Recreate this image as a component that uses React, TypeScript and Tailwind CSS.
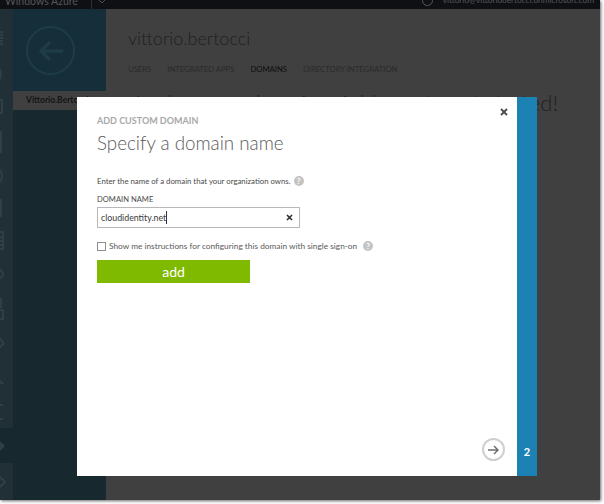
import React from "react";

function Help() {
  return (
    <span className="w-[10px] h-[10px] rounded-full bg-[#c4c4c4] text-white text-[8px] leading-[10px] text-center font-bold inline-block shrink-0">?</span>
  );
}

function RailIcon({ h, mt, d }: { h: number; mt: number; d: string }) {
  return (
    <svg width="13" height={h} viewBox={`0 0 13 ${h}`} className="block shrink-0" style={{ marginTop: mt }} fill="none" stroke="#303f46" strokeWidth="2">
      <path d={d} />
    </svg>
  );
}

export default function App() {
  return (
    <div className="w-[604px] h-[504px] bg-white overflow-hidden relative font-['Lato','Open_Sans',sans-serif]">
      <div className="w-[600px] h-[500px] bg-[#404040] flex flex-col shadow-[1px_1px_3px_#666]">
        <div className="h-[9px] shrink-0 bg-[#0e1014] flex justify-between overflow-hidden">
          <div className="flex h-[9px] items-start">
            <span className="text-[10.5px] leading-[12px] text-[#55575b] pl-[5px] -mt-[5px] whitespace-nowrap">Windows Azure</span>
            <span className="w-px h-[9px] bg-[#2c2e32] ml-[13px]" />
            <svg width="8" height="6" viewBox="0 0 8 6" className="ml-[6px]" fill="none" stroke="#4c4e52" strokeWidth="1"><path d="M1 0l3 3 3-3" /></svg>
          </div>
          <div className="flex h-[9px] items-start pr-[6px]">
            <span className="w-[11px] h-[11px] rounded-full border border-[#55575b] -mt-[5px] mr-[10px]" />
            <span className="text-[8.25px] leading-[12px] text-[#55575b] -mt-[6px] whitespace-nowrap">vittorio@vittoriobertocci.onmicrosoft.com</span>
          </div>
        </div>
        <div className="flex-1 flex min-h-0">
          <div className="w-[13px] shrink-0 bg-[#17282f] flex flex-col overflow-hidden">
            <div className="h-[419px] shrink-0 bg-[#212f36] flex flex-col overflow-hidden">
              <div className="flex flex-col -ml-[9px]">
                <RailIcon h={16} mt={22} d="M1 1h11M1 4h11M1 7h11M1 10h11M1 13h11" />
                <RailIcon h={18} mt={18} d="M10 9a5.5 7.5 0 1 1-11 0a5.5 7.5 0 1 1 11 0" />
                <RailIcon h={15} mt={16} d="M1 1h10v13H1z" />
                <RailIcon h={22} mt={17} d="M10 0v22" />
                <RailIcon h={14} mt={16} d="M1 7a4 6 0 1 1 10 0a4 6 0 1 1-10 0" />
                <RailIcon h={18} mt={16} d="M10 0v18" />
                <RailIcon h={19} mt={14} d="M1 1h11v17H1zM1 6h11M1 10h11M1 14h11" />
                <RailIcon h={14} mt={17} d="M1 7l6-6 6 6-6 6z" />
                <RailIcon h={22} mt={17} d="M10 0v10M2 12h10v9H2z" />
                <RailIcon h={14} mt={16} d="M1 7l6-6 6 6-6 6z" />
                <RailIcon h={10} mt={24} d="M1 10a6 6 0 0 1 11 0z" />
                <RailIcon h={16} mt={20} d="M12 1H6a6 7 0 0 0 0 14h6" />
              </div>
            </div>
            <div className="h-[35px] shrink-0 flex items-center -ml-[8px]">
              <svg width="13" height="12" viewBox="0 0 13 12" fill="#303f46"><path d="M1 6l6-6 6 6-6 6z" /></svg>
            </div>
            <div className="flex-1 bg-[#212f36] flex items-center">
              <svg width="6" height="12" viewBox="0 0 6 12" stroke="#303f46" strokeWidth="2" fill="none"><path d="M0 1l5 5-5 5" /></svg>
            </div>
          </div>
          <div className="w-[93px] shrink-0 bg-[#17282f] flex flex-col">
            <div className="h-[82px] bg-[#152e39] flex items-start pt-[17px] pl-[13px]">
              <div className="w-[49px] h-[49px] rounded-full border-[2px] border-[#1e3c47] flex items-center justify-center">
                <svg width="26" height="22" viewBox="0 0 26 22" fill="none" stroke="#1e3c47" strokeWidth="3.5"><path d="M25 11H3M12 2l-9 9 9 9" /></svg>
              </div>
            </div>
            <div className="h-[19px] bg-[#404040] text-[8.5px] leading-[19px] font-bold text-[#141414] pl-[13px] whitespace-nowrap overflow-hidden">Vittorio.Bertocci</div>
          </div>
          <div className="flex-1 pl-[22px] pt-[15px] min-w-0 overflow-hidden">
            <div className="text-[18px] leading-[28px] font-light text-[#1f1f1f] whitespace-nowrap">vittorio.bertocci</div>
            <div className="flex gap-[16px] mt-[11px] text-[7.7px] leading-[12px] text-[#2a2a2a] whitespace-nowrap">
              <span>USERS</span>
              <span>INTEGRATED APPS</span>
              <span className="text-[#0d0d0d]">DOMAINS</span>
              <span>DIRECTORY INTEGRATION</span>
            </div>
            <div className="mt-[13px] text-[22px] leading-[30px] font-light text-[#1f1f1f] whitespace-nowrap w-[430px] flex justify-end overflow-hidden">You have no domains. Add one to get started!</div>
          </div>
        </div>
      </div>

      <div className="absolute left-[77px] top-[97px] w-[460px] h-[379px] flex">
        <div className="w-[440px] bg-white relative pl-[20px] pt-[17px] flex flex-col items-start">
          <div className="text-[9px] leading-[12px] font-bold text-[#a8a8a8] whitespace-nowrap mt-[1px]">ADD CUSTOM DOMAIN</div>
          <div className="mt-[2px] text-[18.8px] leading-[28px] font-light text-[#595959] whitespace-nowrap">Specify a domain name</div>
          <div className="mt-[18px] flex items-center gap-[3px] text-[7.8px] leading-[12px] text-[#4a4a4a] whitespace-nowrap">
            <span>Enter the name of a domain that your organization owns.</span>
            <Help />
          </div>
          <div className="mt-[6px] text-[7.6px] leading-[12px] text-[#4a4a4a] whitespace-nowrap">DOMAIN NAME</div>
          <div className="mt-[2px] w-[203px] h-[21px] border border-[#b8b8b8] flex items-center justify-between pl-[3px] pr-[6px]">
            <span className="flex items-center text-[8.8px] leading-[14px] text-[#3a3a3a]">cloudidentity.net<span className="w-px h-[13px] bg-[#333]" /></span>
            <svg width="7" height="7" viewBox="0 0 7 7" stroke="#2b2b2b" strokeWidth="1.6" fill="none"><path d="M1 1l5 5M6 1l-5 5" /></svg>
          </div>
          <div className="mt-[12px] flex items-center gap-[3px] text-[8.3px] leading-[12px] text-[#5a5a5a] whitespace-nowrap">
            <span className="w-[9px] h-[9px] border border-[#8f8f8f] bg-white shrink-0" />
            <span>Show me instructions for configuring this domain with single sign-on</span>
            <span className="ml-[3px] flex"><Help /></span>
          </div>
          <button className="mt-[8px] w-[153px] h-[23px] bg-[#7fba00] text-white text-[14px] leading-[18px] text-center">add</button>
          <svg width="8" height="8" viewBox="0 0 8 8" className="absolute right-[9px] top-[11px]" stroke="#4a4a4a" strokeWidth="1.8" fill="none"><path d="M1 1l6 6M7 1l-6 6" /></svg>
          <div className="absolute left-[405px] bottom-[15px] w-[23px] h-[23px] rounded-full border-[2px] border-[#cfcfcf] flex items-center justify-center">
            <svg width="11" height="10" viewBox="0 0 11 10" stroke="#6e6e6e" strokeWidth="1.5" fill="none"><path d="M0 5h10M6 1l4 4-4 4" /></svg>
          </div>
        </div>
        <div className="w-[20px] bg-[#1b82b3] flex flex-col justify-end items-center pb-[17px]">
          <span className="text-[11px] leading-[14px] font-bold text-white">2</span>
        </div>
      </div>
    </div>
  );
}
